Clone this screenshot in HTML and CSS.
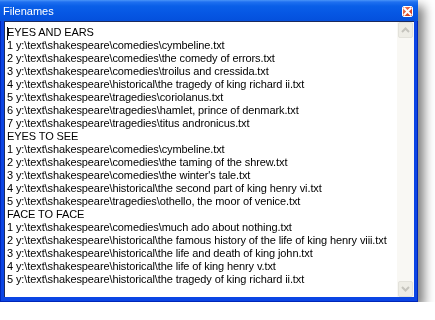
FILE: index.html
```html
<!DOCTYPE html>
<html>
<head>
<meta charset="utf-8">
<link rel="stylesheet" href="styles.css">
</head>
<body>
<div class="window">
  <div class="titlebar">
    <span class="title">Filenames</span>
    <span class="close"><svg width="9" height="9" viewBox="0 0 9 9"><path d="M1.5 1.5 L7.5 7.5 M7.5 1.5 L1.5 7.5" stroke="#fff" stroke-width="2" stroke-linecap="square"/></svg></span>
  </div>
  <div class="client">
    <div class="edit">
      <span class="caret"></span>
      <div class="line">EYES AND EARS</div>
      <div class="line">1 y:\text\shakespeare\comedies\cymbeline.txt</div>
      <div class="line">2 y:\text\shakespeare\comedies\the comedy of errors.txt</div>
      <div class="line">3 y:\text\shakespeare\comedies\troilus and cressida.txt</div>
      <div class="line">4 y:\text\shakespeare\historical\the tragedy of king richard ii.txt</div>
      <div class="line">5 y:\text\shakespeare\tragedies\coriolanus.txt</div>
      <div class="line">6 y:\text\shakespeare\tragedies\hamlet, prince of denmark.txt</div>
      <div class="line">7 y:\text\shakespeare\tragedies\titus andronicus.txt</div>
      <div class="line">EYES TO SEE</div>
      <div class="line">1 y:\text\shakespeare\comedies\cymbeline.txt</div>
      <div class="line">2 y:\text\shakespeare\comedies\the taming of the shrew.txt</div>
      <div class="line">3 y:\text\shakespeare\comedies\the winter's tale.txt</div>
      <div class="line">4 y:\text\shakespeare\historical\the second part of king henry vi.txt</div>
      <div class="line">5 y:\text\shakespeare\tragedies\othello, the moor of venice.txt</div>
      <div class="line">FACE TO FACE</div>
      <div class="line">1 y:\text\shakespeare\comedies\much ado about nothing.txt</div>
      <div class="line">2 y:\text\shakespeare\historical\the famous history of the life of king henry viii.txt</div>
      <div class="line">3 y:\text\shakespeare\historical\the life and death of king john.txt</div>
      <div class="line">4 y:\text\shakespeare\historical\the life of king henry v.txt</div>
      <div class="line">5 y:\text\shakespeare\historical\the tragedy of king richard ii.txt</div>
    </div>
    <div class="scrollbar">
      <div class="sbtn"><svg width="9" height="6" viewBox="0 0 9 6"><path d="M1 5 L4.5 1.5 L8 5" fill="none" stroke="#c5c4bd" stroke-width="2"/></svg></div>
      <div class="track"></div>
      <div class="sbtn"><svg width="9" height="6" viewBox="0 0 9 6"><path d="M1 1 L4.5 4.5 L8 1" fill="none" stroke="#c5c4bd" stroke-width="2"/></svg></div>
    </div>
  </div>
</div>
</body>
</html>
```

FILE: styles.css
```css
html, body {
  margin: 0;
  padding: 0;
  background: #ffffff;
}

.window {
  width: 418px;
  height: 302px;
  box-sizing: border-box;
  display: flex;
  flex-direction: column;
  background: #0b45e4;
  border: 1px solid #0026b8;
  border-top: 0;
  padding: 0 3px 4px 3px;
  box-shadow: 6px 6px 10px rgba(0, 0, 0, 0.5);
}

.titlebar {
  height: 21px;
  margin: 0 -4px;
  padding: 1px 5px 0 3px;
  box-sizing: border-box;
  display: flex;
  align-items: center;
  justify-content: space-between;
  background: linear-gradient(#4a95f8 0, #1f70f0 2px, #0a5fe8 6px, #0656e3 14px, #0450dc 21px);
}

.title {
  font-family: "Liberation Sans", Arial, sans-serif;
  font-size: 11px;
  color: #ffffff;
}

.close {
  width: 11px;
  height: 11px;
  box-sizing: border-box;
  border: 1px solid #ffffff;
  border-radius: 2px;
  background: linear-gradient(135deg, #f08a68 0, #e0522f 50%, #c8391b 100%);
  display: flex;
  align-items: center;
  justify-content: center;
  margin-top: 1px;
}

.close svg {
  display: block;
}

.client {
  flex: 1;
  display: flex;
  background: #ffffff;
  border-top: 1px solid #1d2a5a;
  border-left: 1px solid #1d2a5a;
  min-height: 0;
}

.edit {
  position: relative;
  flex: 1;
  padding: 4px 0 0 2px;
  overflow: hidden;
  font-family: "Liberation Sans", Arial, sans-serif;
  font-size: 11px;
  letter-spacing: -0.1px;
  line-height: 13px;
  color: #000000;
  white-space: nowrap;
}

.caret {
  position: absolute;
  left: 2px;
  top: 5px;
  width: 1px;
  height: 13px;
  background: #ffffff;
  mix-blend-mode: difference;
}

.scrollbar {
  width: 17px;
  display: flex;
  flex-direction: column;
  background: #f9f8f4;
}

.sbtn {
  height: 16px;
  margin: 0 1px 0 1px;
  box-sizing: border-box;
  border: 1px solid #e3e2db;
  border-radius: 2px;
  background: #eeede6;
  display: flex;
  align-items: center;
  justify-content: center;
}

.sbtn svg {
  display: block;
}

.track {
  flex: 1;
}
```
